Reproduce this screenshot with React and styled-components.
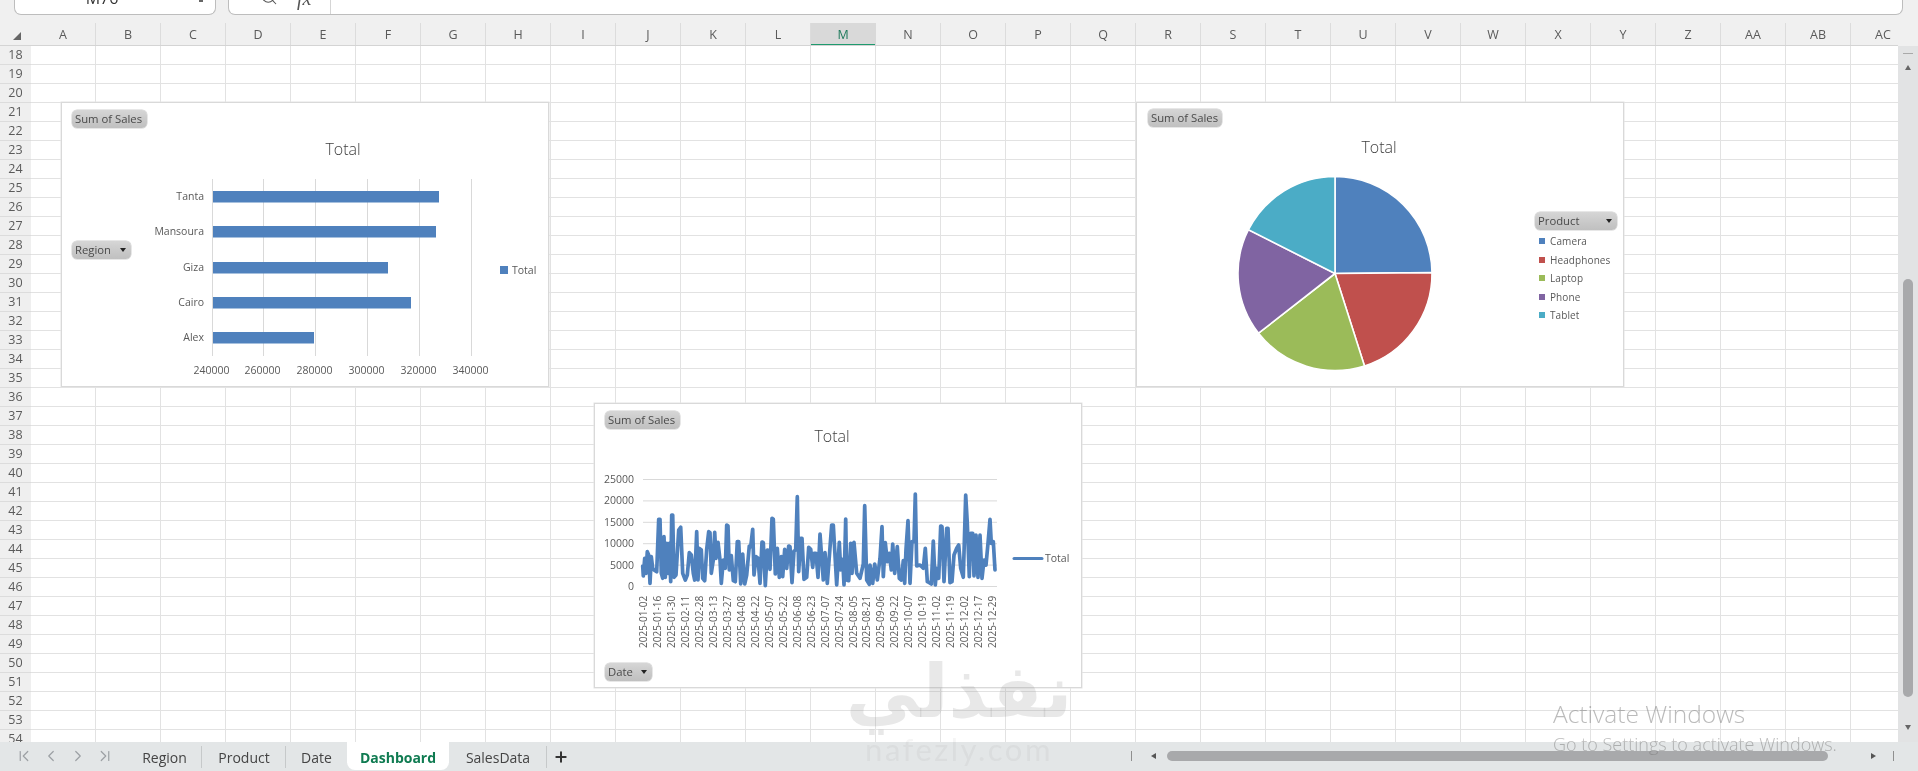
import React from "react";
import styled, { createGlobalStyle } from "styled-components";
import { Search, ChevronFirst, ChevronLast, ChevronLeft, ChevronRight, Plus } from "lucide-react";

const FONT = `"Open Sans", "Noto Sans", "Liberation Sans", sans-serif`;

const GlobalStyle = createGlobalStyle`
  html, body { margin: 0; padding: 0; background: #f0f0f0; overflow: hidden; }
  body { font-family: ${FONT}; }
`;

const Page = styled.div`
  position: relative; width: 1918px; height: 771px; overflow: hidden;
  display: flex; flex-direction: column; background: #f0f0f0; color: #555;
  filter: blur(.3px);
`;
const FormulaBar = styled.div`
  flex: 0 0 23px; height: 23px; overflow: hidden; display: flex; align-items: flex-start;
  padding: 0 15px 0 14px; gap: 12px; box-sizing: border-box;
`;
const NameBox = styled.div`
  width: 202px; height: 15px; box-sizing: border-box; background: #fff;
  border: 1px solid #bdbdbd; border-top: 0; border-radius: 0 0 7px 7px;
  display: flex; justify-content: center; align-items: flex-start; position: relative;
  font-size: 16px; line-height: 16px; color: #333; overflow: hidden;
  span { transform: translate(-13px, -10px); }
`;
const NameCaret = styled.i`
  position: absolute; right: 12px; top: 0; width: 4px; height: 2px; background: #666;
`;
const FormulaInput = styled.div`
  flex: 1; height: 15px; box-sizing: border-box; background: #fff;
  border: 1px solid #bdbdbd; border-top: 0; border-radius: 0 0 7px 7px;
  display: flex; align-items: flex-start; overflow: hidden; color: #555;
`;
const FormulaTools = styled.div`
  width: 102px; height: 14px; border-right: 1px solid #d5d5d5; display: flex; align-items: flex-start;
  padding-left: 31px; gap: 19px; box-sizing: border-box; overflow: hidden;
  svg { flex: none; transform: translateY(-12px); }
`;
const Fx = styled.em`
  font-family: "Liberation Serif", serif; font-size: 20px; line-height: 14px; transform: translateY(-9px);
`;
const Workspace = styled.div`
  flex: 1; min-height: 0; display: flex;
`;
const SheetColumn = styled.div`
  width: 1898px; display: flex; flex-direction: column; min-height: 0;
`;
const ColumnHeader = styled.div`
  flex: 0 0 23px; height: 23px; display: flex; overflow: hidden; box-sizing: border-box;
  border-bottom: 1px solid #d4d4d4;
`;
const Corner = styled.div`
  flex: 0 0 31px; display: flex; align-items: flex-end; justify-content: flex-end;
  padding: 0 10px 5px 0; box-sizing: border-box;
`;
const ColCell = styled.div`
  flex: 0 0 65px; box-sizing: border-box; text-align: center;
  font-size: 12.5px; line-height: 23px;
  color: ${p => (p.$active ? "#1f7a5c" : "#5a5a5a")};
  background: ${p => (p.$active ? "#d9d9d9" : "transparent")};
  border-right: 1px solid ${p => (p.$active ? "#d9d9d9" : "#dcdcdc")};
  box-shadow: ${p => (p.$active ? "inset 0 -2px 0 #1f9a6e" : "none")};
  height: ${p => (p.$active ? "23px" : "22px")};
`;
const SheetBody = styled.div`
  flex: 1; min-height: 0; display: flex; overflow: hidden;
`;
const RowHeader = styled.div`
  flex: 0 0 31px; display: flex; flex-direction: column; background: #efefef;
`;
const RowCell = styled.div`
  flex: 0 0 19px; height: 19px; box-sizing: border-box; border-bottom: 1px solid #dcdcdc;
  font-size: 12.5px; line-height: 18px; text-align: center; color: #5a5a5a;
`;
const Canvas = styled.div`
  position: relative; flex: 1; background-color: #fff;
  background-image:
    linear-gradient(to right, transparent 64px, #e2e2e2 64px),
    linear-gradient(to bottom, transparent 18px, #e2e2e2 18px);
  background-size: 65px 100%, 100% 19px;
`;
const ChartFrame = styled.div`
  position: absolute; box-sizing: border-box;
  left: ${p => p.$left}px; top: ${p => p.$top}px; width: 488px; height: 285px;
  background: #fff; border: 1px solid #d9d9d9; box-shadow: 0 0 0 .5px #e4e4e4;
  svg { position: absolute; left: -1px; top: -1px; display: block; }
  svg text { font-family: ${FONT}; fill: #595959; }
`;
const ChartTitle = styled.text`
  &&& { fill: #3f3f3f; }
  font-size: 16px; font-weight: 300; text-anchor: middle;
`;
const FieldButton = styled.div`
  position: absolute; left: ${p => p.$left}px; top: ${p => p.$top}px; width: ${p => p.$w}px; height: 18px;
  box-sizing: border-box; padding-left: 3px; border-radius: 5px;
  background: linear-gradient(#d6d6d6, #c8c8c8 60%, #c0c0c0);
  box-shadow: 0 0 0 .5px #cfcfcf;
  font-size: 11.3px; line-height: 17px; color: #4a4a4a; white-space: nowrap;
  &::after {
    content: ${p => (p.$caret ? '""' : "none")};
    position: absolute; right: 5px; top: 7px;
    border: 3px solid transparent; border-top: 4px solid #222; border-bottom: 0;
  }
`;
const VScroll = styled.div`
  flex: 1; display: flex; flex-direction: column; align-items: center;
  margin-top: 23px; background: #e2e3e4; position: relative;
`;
const VDash = styled.i`
  width: 10px; height: 1px; background: #a9a9a9; margin-top: 7px;
`;
const VThumb = styled.div`
  position: absolute; left: 5px; top: 233px; width: 10px; height: 418px;
  border-radius: 5px; background: #a8a9ab;
`;
const ArrowUp = styled.i`
  width: 0; height: 0; margin-top: 11px; border: 3px solid transparent; border-top: 0; border-bottom: 5px solid #666;
`;
const ArrowDown = styled.i`
  position: absolute; left: 7px; top: 679px; width: 0; height: 0;
  border: 3px solid transparent; border-bottom: 0; border-top: 5px solid #666;
`;
const TabBar = styled.div`
  flex: 0 0 29px; height: 29px; background: #e3e6e7; display: flex; align-items: stretch;
`;
const TabNav = styled.div`
  flex: 0 0 127px; display: flex; align-items: center; padding-left: 15px; gap: 9px; box-sizing: border-box;
  padding-bottom: 2px; color: #9ca0a4;
`;
const Tab = styled.div`
  flex: 0 0 ${p => p.$w}px; box-sizing: border-box; text-align: center; position: relative;
  font-size: 14px; line-height: 31px; white-space: nowrap;
  font-weight: ${p => (p.$active ? 700 : 400)};
  color: ${p => (p.$active ? "#0f7b51" : "#444")};
  background: ${p => (p.$active ? "#fff" : "transparent")};
  border-radius: ${p => (p.$active ? "0 0 8px 8px" : "0")};
  margin-bottom: ${p => (p.$active ? "1px" : "0")};
  &::after {
    content: ${p => (p.$sep ? '""' : "none")};
    position: absolute; right: 0; top: 4px; bottom: 3px; width: 1px; background: #c6c9ca;
  }
`;
const AddSheet = styled.div`
  margin-left: 6px; display: flex; align-items: center; color: #333;
`;
const HScrollArea = styled.div`
  margin-left: auto; flex: 0 0 787px; box-sizing: border-box; display: flex; align-items: center;
  padding-right: 24px; padding-bottom: 1px;
`;
const HSep = styled.i`
  width: 1px; height: 10px; background: #8f8f8f;
`;
const ArrowLeft = styled.i`
  margin-left: 19px; width: 0; height: 0; border: 3px solid transparent; border-left: 0; border-right: 5px solid #555;
`;
const ArrowRight = styled.i`
  margin-left: 43px; width: 0; height: 0; border: 3px solid transparent; border-right: 0; border-left: 5px solid #555;
`;
const HThumb = styled.div`
  margin-left: 11px; width: 661px; height: 10px; border-radius: 5px; background: #a8a9ab; flex: none;
`;
const HEnd = styled.i`
  margin-left: auto; width: 1px; height: 10px; background: #8f8f8f;
`;
const ActivateNote = styled.div`
  position: absolute; left: 1553px; top: 697px; pointer-events: none; color: rgba(120,120,120,.5);
  font-weight: 300; white-space: nowrap;
`;
const ActivateTitle = styled.div`
  font-size: 24.5px; line-height: 34px;
`;
const ActivateSub = styled.div`
  font-size: 18px; line-height: 26px;
`;
const Watermark = styled.div`
  position: absolute; left: 842px; top: 643px; width: 234px; pointer-events: none; text-align: center;
  color: rgba(150,150,150,.22);
`;
const WatermarkArabic = styled.div`
  font-family: "DejaVu Sans", sans-serif; font-weight: 700; font-size: 74px; line-height: 96px; direction: rtl;
`;
const WatermarkLatin = styled.div`
  font-family: "Lato", sans-serif; font-size: 31px; line-height: 30px; letter-spacing: 2.5px; margin-top: -5px;
  color: rgba(120,120,120,.07);
`;

const colName = i => (i < 26 ? String.fromCharCode(65 + i) : "A" + String.fromCharCode(65 + i - 26));
const COLS = Array.from({ length: 29 }, (_, i) => colName(i));
const ROWS = Array.from({ length: 37 }, (_, i) => 18 + i);

const BLUE = "#4f81bd";

function BarChart() {
  const grid = [212.5, 263.5, 315.5, 367.5, 419.5, 471.5];
  const ticks = ["240000", "260000", "280000", "300000", "320000", "340000"];
  const bars = [
    ["Tanta", 191, 439, 196],
    ["Mansoura", 226, 436, 231],
    ["Giza", 262, 388, 267],
    ["Cairo", 297, 411, 302],
    ["Alex", 332, 314, 337],
  ];
  return (
    <ChartFrame $left={30} $top={56}>
      <svg width="488" height="285" viewBox="61 102 488 285">
        <ChartTitle x="343" y="155">Total</ChartTitle>
        {grid.map(x => <line key={x} x1={x} x2={x} y1="179" y2="356" stroke="#d9d9d9" />)}
        {bars.map(([n, y, end, ty]) => (
          <g key={n}>
            <rect x="213" y={y} width={end - 213} height="11.5" fill={BLUE} />
            <text x="204" y={ty + 3.5} fontSize="10.5" textAnchor="end">{n}</text>
          </g>
        ))}
        {ticks.map((t, i) => <text key={t} x={grid[i] - 1} y="374" fontSize="10.5" textAnchor="middle">{t}</text>)}
        <rect x="500" y="266" width="8" height="8" fill={BLUE} />
        <text x="512" y="274" fontSize="10.5">Total</text>
      </svg>
      <FieldButton $left={10} $top={7} $w={75}>Sum of Sales</FieldButton>
      <FieldButton $left={10} $top={138} $w={59} $caret>Region</FieldButton>
    </ChartFrame>
  );
}

function slice(cx, cy, r, a0, a1) {
  const p = a => [cx + r * Math.sin((a * Math.PI) / 180), cy - r * Math.cos((a * Math.PI) / 180)];
  const [x0, y0] = p(a0);
  const [x1, y1] = p(a1);
  return `M${cx} ${cy}L${x0.toFixed(2)} ${y0.toFixed(2)}A${r} ${r} 0 ${a1 - a0 > 180 ? 1 : 0} 1 ${x1.toFixed(2)} ${y1.toFixed(2)}Z`;
}

function PieChart() {
  const parts = [
    ["Camera", 0, 89.5, "#4f81bd", 241],
    ["Headphones", 89.5, 162.3, "#c0504d", 260],
    ["Laptop", 162.3, 232, "#9bbb59", 278],
    ["Phone", 232, 296.8, "#8064a2", 297],
    ["Tablet", 296.8, 360, "#4bacc6", 315],
  ];
  return (
    <ChartFrame $left={1105} $top={56}>
      <svg width="488" height="285" viewBox="1136 102 488 285">
        <ChartTitle x="1379" y="153">Total</ChartTitle>
        {parts.map(([n, a, b, c, y]) => (
          <g key={n}>
            <path d={slice(1335, 273.5, 97, a, b)} fill={c} stroke="#fff" strokeWidth="1.6" />
            <rect x="1539" y={y - 3} width="6" height="6" fill={c} />
            <text x="1550" y={y + 3.5} fontSize="10" letterSpacing=".1">{n}</text>
          </g>
        ))}
      </svg>
      <FieldButton $left={11} $top={6} $w={74}>Sum of Sales</FieldButton>
      <FieldButton $left={398} $top={109} $w={82} $caret>Product</FieldButton>
    </ChartFrame>
  );
}

const TRACE_A = [38,228,40,258,44,205,48,250,52,185,56,195,60,280,64,200,68,235,72,240,80,245,86,88,90,88,94,250,98,265,102,140,106,262,110,160,114,250,118,160,122,275,125,75,128,75,132,262,138,255,146,120,152,112,158,250,166,270,172,255,178,188,184,195,190,250,194,270,200,125,204,270,208,175,214,180,218,265,224,272,230,178,236,125,240,128,244,250,250,210,254,127,258,205,264,157,270,210,274,280,280,210,286,235,290,105,294,108,298,240,304,197,310,272,316,275,322,155,326,155,332,282,338,192,344,282,350,255,358,168,362,170,368,118,372,255,378,200,384,205,390,280,396,156,400,158,406,287,412,180,416,182,420,238,426,85,430,88,436,252,442,175,448,262,454,200,458,260,464,178,470,235,476,168,480,170,486,278,492,183,497,180,502,20,506,245,512,145,516,145,522,268,530,262,536,172,542,178,548,232,552,190,558,190,564,262,570,132];
const TRACE_B = [10,270,15,188,22,280,35,105,40,105,50,285,58,157,62,240,68,208,72,285,77,87,80,270,86,272,92,160,96,250,102,157,110,250,120,265,130,222,134,47,140,270,148,283,150,225,158,280,164,222,172,270,180,205,186,110,190,260,196,158,202,215,208,190,214,240,218,162,224,250,232,170,238,265,244,270,250,212,254,280,258,178,264,92,270,280,276,155,282,155,286,12,290,228,300,225,310,235,316,175,322,275,328,278,334,282,340,153,346,285,350,235,356,265,362,108,366,110,372,275,380,115,384,115,390,278,396,275,402,195,410,175,416,165,422,235,430,262,437,15,442,100,448,260,452,130,458,130,462,258,468,135,474,262,480,135,486,265,492,210,498,225,504,160,510,88,514,160,520,155,525,240];

function tracePoints() {
  const out = [];
  for (let i = 0; i < TRACE_A.length; i += 2) out.push(`${(630 + TRACE_A[i] / 3).toFixed(1)},${(490 + TRACE_A[i + 1] / 3).toFixed(1)}`);
  for (let i = 0; i < TRACE_B.length; i += 2) out.push(`${(820 + TRACE_B[i] / 3).toFixed(1)},${(490 + TRACE_B[i + 1] / 3).toFixed(1)}`);
  return out.join(" ");
}

const DATES = ["01-02","01-16","01-30","02-11","02-28","03-13","03-27","04-08","04-22","05-07","05-22","06-08","06-23","07-07","07-24","08-05","08-21","09-06","09-22","10-07","10-19","11-02","11-19","12-02","12-17","12-29"];

function LineChart() {
  const levels = [25000, 20000, 15000, 10000, 5000, 0];
  return (
    <ChartFrame $left={563} $top={357}>
      <svg width="488" height="285" viewBox="594 403 488 285">
        <ChartTitle x="832" y="442">Total</ChartTitle>
        {levels.map((l, i) => {
          const y = 479.5 + i * 21.4;
          return (
            <g key={l}>
              <line x1="643" x2="997" y1={y} y2={y} stroke="#d9d9d9" />
              <text x="634" y={y + 3.5} fontSize="10.5" textAnchor="end">{l}</text>
            </g>
          );
        })}
        <polyline points={tracePoints()} fill="none" stroke={BLUE} strokeWidth="3.7" strokeLinejoin="round" strokeLinecap="round" />
        {DATES.map((d, i) => {
          const x = 643.3 + i * 13.98 + 3.5;
          return <text key={d} fontSize="10" transform={`translate(${x} 648) rotate(-90)`}>{`2025-${d}`}</text>;
        })}
        <line x1="1014" x2="1042" y1="558.5" y2="558.5" stroke={BLUE} strokeWidth="3" strokeLinecap="round" />
        <text x="1045" y="562" fontSize="10.5">Total</text>
      </svg>
      <FieldButton $left={10} $top={7} $w={75}>Sum of Sales</FieldButton>
      <FieldButton $left={10} $top={259} $w={47} $caret>Date</FieldButton>
    </ChartFrame>
  );
}

const TABS = [
  { n: "Region", w: 75, sep: true },
  { n: "Product", w: 84, sep: true },
  { n: "Date", w: 61 },
  { n: "Dashboard", w: 102, active: true },
  { n: "SalesData", w: 98, sep: true },
];

export default function App() {
  return (
    <Page>
      <GlobalStyle />
      <FormulaBar>
        <NameBox><span>M76</span><NameCaret /></NameBox>
        <FormulaInput>
          <FormulaTools>
            <Search size={18} strokeWidth={1.4} />
            <Fx>fx</Fx>
          </FormulaTools>
        </FormulaInput>
      </FormulaBar>
      <Workspace>
        <SheetColumn>
          <ColumnHeader>
            <Corner>
              <svg width="8" height="8" viewBox="0 0 8 8"><path d="M8 0V8H0Z" fill="#666" /></svg>
            </Corner>
            {COLS.map(c => <ColCell key={c} $active={c === "M"}>{c}</ColCell>)}
          </ColumnHeader>
          <SheetBody>
            <RowHeader>
              {ROWS.map(r => <RowCell key={r}>{r}</RowCell>)}
            </RowHeader>
            <Canvas>
              <BarChart />
              <PieChart />
              <LineChart />
            </Canvas>
          </SheetBody>
        </SheetColumn>
        <VScroll>
          <VDash />
          <ArrowUp />
          <VThumb />
          <ArrowDown />
        </VScroll>
      </Workspace>
      <TabBar>
        <TabNav>
          <ChevronFirst size={18} strokeWidth={1.6} />
          <ChevronLeft size={18} strokeWidth={1.6} />
          <ChevronRight size={18} strokeWidth={1.6} />
          <ChevronLast size={18} strokeWidth={1.6} />
        </TabNav>
        {TABS.map(t => <Tab key={t.n} $w={t.w} $active={t.active} $sep={t.sep}>{t.n}</Tab>)}
        <AddSheet><Plus size={16} strokeWidth={3} /></AddSheet>
        <HScrollArea>
          <HSep />
          <ArrowLeft />
          <HThumb />
          <ArrowRight />
          <HEnd />
        </HScrollArea>
      </TabBar>
      <Watermark>
        <WatermarkArabic>نفذلي</WatermarkArabic>
        <WatermarkLatin>nafezly.com</WatermarkLatin>
      </Watermark>
      <ActivateNote>
        <ActivateTitle>Activate Windows</ActivateTitle>
        <ActivateSub>Go to Settings to activate Windows.</ActivateSub>
      </ActivateNote>
    </Page>
  );
}
